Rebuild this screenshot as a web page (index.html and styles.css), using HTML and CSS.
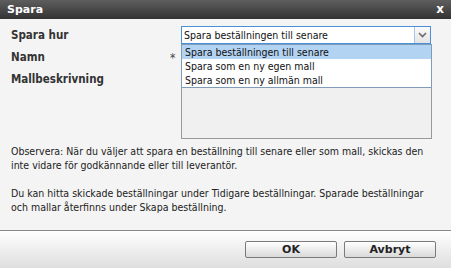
FILE: index.html
```html
<!DOCTYPE html>
<html>
<head>
<meta charset="utf-8">
<link rel="stylesheet" href="styles.css">
</head>
<body>
<div class="dialog">
  <div class="titlebar">
    <span class="title">Spara</span>
    <span class="close">x</span>
  </div>
  <div class="content">
    <div class="form">
      <div class="label">Spara hur</div>
      <div class="req"></div>
      <div class="field">
        <div class="select">
          <span class="select-text">Spara beställningen till senare</span>
          <span class="select-btn"><svg width="9" height="6" viewBox="0 0 9 6"><path d="M1 1 L4.5 4.5 L8 1" fill="none" stroke="#6b6b6b" stroke-width="1.6"/></svg></span>
        </div>
        <ul class="options">
          <li class="opt selected">Spara beställningen till senare</li>
          <li class="opt">Spara som en ny egen mall</li>
          <li class="opt">Spara som en ny allmän mall</li>
        </ul>
      </div>
      <div class="label">Namn</div>
      <div class="req">*</div>
      <div class="field"><div class="input"></div></div>
      <div class="label">Mallbeskrivning</div>
      <div class="req"></div>
      <div class="field"><div class="textarea"></div></div>
    </div>
    <p class="note">Observera: När du väljer att spara en beställning till senare eller som mall, skickas den inte vidare för godkännande eller till leverantör.</p>
    <p class="note">Du kan hitta skickade beställningar under Tidigare beställningar. Sparade beställningar och mallar återfinns under Skapa beställning.</p>
  </div>
  <div class="footer">
    <button class="btn">OK</button>
    <button class="btn">Avbryt</button>
  </div>
</div>
</body>
</html>
```

FILE: styles.css
```css
* { box-sizing: border-box; }
html, body { margin: 0; padding: 0; }
body {
  width: 451px;
  height: 268px;
  overflow: hidden;
  font-family: "DejaVu Sans Condensed", "DejaVu Sans", sans-serif;
  font-size: 10.5px;
  color: #222;
}
.dialog {
  width: 451px;
  height: 268px;
  display: flex;
  flex-direction: column;
  background: #f4f4f4;
}
.titlebar {
  height: 19px;
  flex: none;
  display: flex;
  align-items: center;
  justify-content: space-between;
  padding: 0 7px 0 7px;
  background: linear-gradient(#5e5e5e, #333333);
  color: #fff;
  font-family: "DejaVu Sans", sans-serif;
  font-weight: bold;
  font-size: 11px;
}
.close { font-size: 12px; line-height: 1; padding-bottom: 2px; }
.content {
  flex: 1;
  padding: 7px 11px 0 11px;
}
.form {
  display: grid;
  grid-template-columns: 159px 11px 250px;
  grid-template-rows: 18px 18px 69px;
  row-gap: 4px;
}
.label {
  font-family: "DejaVu Sans Condensed", "DejaVu Sans", sans-serif;
  font-weight: bold;
  font-size: 11.5px;
  color: #333;
  line-height: 18px;
}
.req { line-height: 20px; font-size: 12px; color: #444; }
.field { position: relative; }
.select {
  height: 18px;
  border: 1px solid #4a90d9;
  background: #fff;
  display: flex;
  align-items: stretch;
}
.select-text {
  flex: 1;
  padding-left: 2px;
  line-height: 16px;
  color: #111;
  white-space: nowrap;
}
.select-btn {
  width: 16px;
  border-left: 1px solid #a9c4e4;
  background: linear-gradient(#fafafa, #e4e4e4);
  display: flex;
  align-items: center;
  justify-content: center;
}
.options {
  position: absolute;
  left: 0;
  top: 18px;
  width: 251px;
  margin: 0;
  padding: 0;
  list-style: none;
  background: #fff;
  border: 1px solid #7f9db9;
  z-index: 5;
}
.opt {
  height: 14px;
  line-height: 14px;
  padding-left: 3px;
  color: #111;
  white-space: nowrap;
}
.opt.selected { background: #b3d3f3; }
.input {
  height: 18px;
  border: 1px solid #999;
  background: #f0f0f0;
}
.textarea {
  height: 69px;
  width: 251px;
  border: 1px solid #999;
  background: #f0f0f0;
}
.note {
  margin: 0;
  padding-top: 5px;
  line-height: 14px;
  color: #222;
}
.note + .note { padding-top: 14px; }
.footer {
  height: 38px;
  flex: none;
  border-top: 1px solid #888;
  background: linear-gradient(#ffffff, #dedede);
  display: flex;
  justify-content: flex-end;
  align-items: flex-start;
  gap: 7px;
  padding: 10px 15px 0 0;
}
.btn {
  width: 92px;
  height: 17px;
  margin: 0;
  padding: 0;
  border: 1px solid #7a7a7a;
  border-radius: 2px;
  background: linear-gradient(#ffffff, #d9d9d9);
  font-family: "DejaVu Sans", sans-serif;
  font-weight: bold;
  font-size: 11px;
  color: #222;
  line-height: 15px;
}
```
